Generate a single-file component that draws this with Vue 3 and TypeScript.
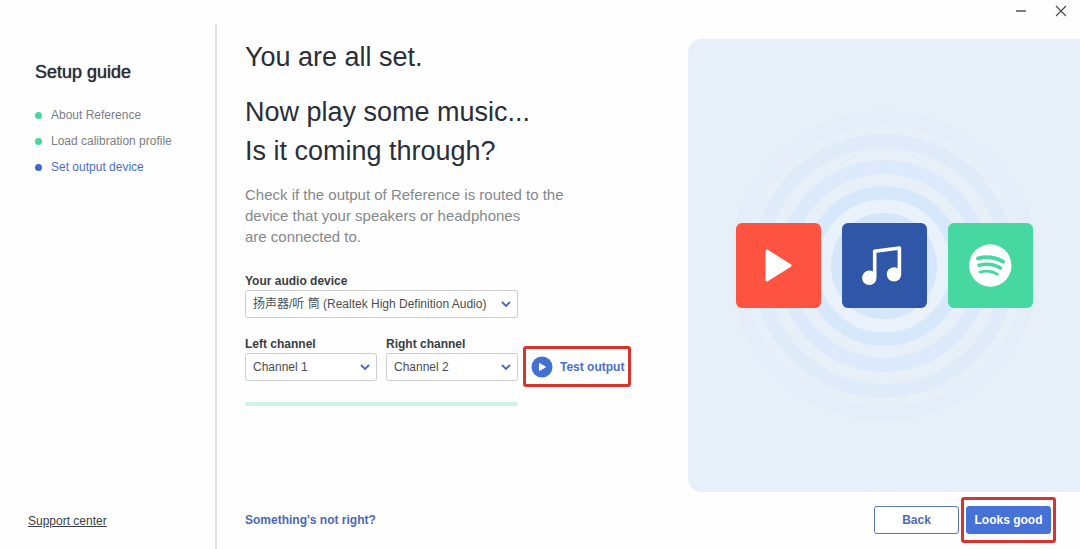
<script setup lang="ts">
import { ref } from 'vue'

interface Step {
  label: string
  state: 'done' | 'current'
}

const steps: Step[] = [
  { label: 'About Reference', state: 'done' },
  { label: 'Load calibration profile', state: 'done' },
  { label: 'Set output device', state: 'current' },
]

const devices: string[] = ['扬声器/听 筒 (Realtek High Definition Audio)']
const channels: string[] = ['Channel 1', 'Channel 2']

const device = ref(devices[0])
const left = ref(channels[0])
const right = ref(channels[1])

const rings = [
  { r: 73, opacity: 0.85 },
  { r: 99, opacity: 0.6 },
  { r: 125, opacity: 0.4 },
  { r: 148, opacity: 0.14 },
]
</script>

<template>
  <div class="window">
    <header class="titlebar">
      <button type="button" class="winbtn" aria-label="Minimize">
        <svg width="12" height="12" viewBox="0 0 12 12"><path d="M1 6H11" stroke="#444" stroke-width="1.4" /></svg>
      </button>
      <button type="button" class="winbtn" aria-label="Close">
        <svg width="12" height="12" viewBox="0 0 12 12"><path d="M1 1L11 11M11 1L1 11" stroke="#444" stroke-width="1.1" /></svg>
      </button>
    </header>

    <div class="body">
      <aside class="sidebar">
        <h2 class="guide">Setup guide</h2>
        <ol class="steps">
          <li v-for="s in steps" :key="s.label" class="step" :class="s.state">
            <span class="dot"></span>{{ s.label }}
          </li>
        </ol>
        <a class="support" href="#support">Support center</a>
      </aside>

      <main class="main">
        <div class="content">
          <section class="setup">
            <h1 class="title">You are all set.</h1>
            <p class="title question">Now play some music...<br />Is it coming through?</p>
            <p class="hint">
              Check if the output of Reference is routed to the<br />
              device that your speakers or headphones<br />
              are connected to.
            </p>

            <div class="form">
              <div class="field wide">
                <label for="device">Your audio device</label>
                <div class="picker">
                  <select id="device" v-model="device">
                    <option v-for="d in devices" :key="d">{{ d }}</option>
                  </select>
                  <svg class="chevron" width="10" height="7" viewBox="0 0 10 7"><path d="M1 1L5 5L9 1" /></svg>
                </div>
              </div>
              <div class="field">
                <label for="left">Left channel</label>
                <div class="picker">
                  <select id="left" v-model="left">
                    <option v-for="c in channels" :key="c">{{ c }}</option>
                  </select>
                  <svg class="chevron" width="10" height="7" viewBox="0 0 10 7"><path d="M1 1L5 5L9 1" /></svg>
                </div>
              </div>
              <div class="field">
                <label for="right">Right channel</label>
                <div class="picker">
                  <select id="right" v-model="right">
                    <option v-for="c in channels" :key="c">{{ c }}</option>
                  </select>
                  <svg class="chevron" width="10" height="7" viewBox="0 0 10 7"><path d="M1 1L5 5L9 1" /></svg>
                </div>
              </div>
              <div class="mark test-mark">
                <button type="button" class="test">
                  <svg width="22" height="22" viewBox="0 0 22 22">
                    <circle cx="11" cy="11" r="10.5" fill="#4470d2" />
                    <path d="M8.5 7.5L14.5 11L8.5 14.5Z" fill="#fff" stroke="#fff" stroke-width="1" stroke-linejoin="round" />
                  </svg>
                  Test output
                </button>
              </div>
              <div class="meter"></div>
            </div>
          </section>

          <section class="stage">
            <svg class="waves" width="360" height="360" viewBox="0 0 360 360">
              <circle cx="180" cy="180" r="53" fill="#d5e6fb" />
              <circle
                v-for="w in rings"
                :key="w.r"
                cx="180"
                cy="180"
                :r="w.r"
                fill="none"
                stroke="#d5e6fb"
                stroke-width="14"
                :stroke-opacity="w.opacity"
              />
              <circle cx="180" cy="180" r="60" fill="none" stroke="#e9f1fa" stroke-width="13" />
            </svg>
            <div class="tiles">
              <svg class="tile video" viewBox="0 0 85 85">
                <path d="M31 28L54 42.5L31 57Z" fill="#fff" stroke="#fff" stroke-width="3" stroke-linejoin="round" />
              </svg>
              <svg class="tile music" viewBox="0 0 85 85">
                <path d="M32.7 54V28.3L57.4 25V51" fill="none" stroke="#fff" stroke-width="3.6" stroke-linejoin="round" />
                <circle cx="27.3" cy="54.8" r="7.2" fill="#fff" />
                <circle cx="52" cy="51.4" r="7.2" fill="#fff" />
              </svg>
              <svg class="tile stream" viewBox="0 0 85 85">
                <circle cx="42.3" cy="42.5" r="21.2" fill="#fff" />
                <g fill="none" stroke="#47d7a0" stroke-linecap="round">
                  <path d="M30 35.5C38 33.2 48 34.2 55 38.6" stroke-width="4" />
                  <path d="M31 42.3C38.500 40.300 46.500 41.300 52.500 45" stroke-width="3.500" />
                  <path d="M32 49C38 47.500 44.500 48 49.500 51.300" stroke-width="2.800" />
                </g>
              </svg>
            </div>
          </section>
        </div>

        <footer class="footer">
          <a class="trouble" href="#help">Something's not right?</a>
          <div class="actions">
            <button type="button" class="btn back">Back</button>
            <div class="mark good-mark">
              <button type="button" class="btn primary">Looks good</button>
            </div>
          </div>
        </footer>
      </main>
    </div>
  </div>
</template>

<style>
body {
  margin: 0;
  background: #fefefe;
}
</style>

<style scoped>
.window {
  box-sizing: border-box;
  min-height: 100vh;
  display: flex;
  flex-direction: column;
  font-family: 'Liberation Sans', 'Noto Sans CJK SC', Arial, sans-serif;
  font-size: 12px;
  line-height: 16px;
  color: #2b2e38;
}
.titlebar {
  height: 24px;
  display: flex;
  justify-content: flex-end;
  align-items: flex-start;
  gap: 16px;
  padding-right: 7px;
}
.winbtn {
  width: 24px;
  height: 22px;
  padding: 0;
  border: 0;
  background: none;
  display: flex;
  align-items: center;
  justify-content: center;
}
.body {
  flex: 1;
  display: grid;
  grid-template-columns: 217px minmax(0, 1fr);
}
.sidebar {
  display: flex;
  flex-direction: column;
  border-right: 2px solid #e2e2e4;
  padding: 36px 12px 20px 28px;
}
.guide {
  margin: 0 7px 23px;
  font-size: 18px;
  line-height: 24px;
  font-weight: 400;
  text-shadow: 0 0 1px #2b2e38;
}
.steps {
  list-style: none;
  margin: 0 7px;
  padding: 0;
}
.step {
  display: flex;
  align-items: center;
  gap: 9px;
  height: 16px;
  margin-bottom: 10px;
  color: #7c8084;
}
.dot {
  width: 7px;
  height: 7px;
  border-radius: 50%;
  background: #47d7a0;
}
.current {
  color: #4c6fc0;
}
.current .dot {
  background: #3f69c8;
}
.support {
  margin-top: auto;
  align-self: flex-start;
  color: #3c3f45;
}
.main {
  display: flex;
  flex-direction: column;
  padding-left: 28px;
}
.content {
  flex: 1;
  display: grid;
  grid-template-columns: minmax(390px, 443fr) minmax(300px, 392fr);
}
.setup {
  padding-top: 14px;
}
.title {
  margin: 0;
  font-size: 27px;
  line-height: 39px;
  font-weight: 400;
}
.question {
  margin-top: 16px;
}
.hint {
  margin: 13px 0 26px;
  font-size: 15px;
  line-height: 21px;
  color: #85888c;
}
.form {
  display: grid;
  grid-template-columns: 132px 132px auto;
  justify-content: start;
  gap: 18px 9px;
}
.field {
  display: flex;
  flex-direction: column;
  gap: 1px;
}
.wide {
  grid-column: 1 / 3;
}
.wide + .field {
  grid-column: 1;
}
.field label {
  font-weight: 700;
  color: #3a3d43;
}
.picker {
  display: grid;
  align-items: center;
}
.picker select,
.chevron {
  grid-area: 1 / 1;
}
.picker select {
  box-sizing: border-box;
  width: 100%;
  height: 28px;
  padding: 0 24px 0 7px;
  border: 1px solid #cdced0;
  border-radius: 3px;
  background: #fff;
  appearance: none;
  font: inherit;
  color: #4a4d52;
}
.chevron {
  justify-self: end;
  margin-right: 7px;
  pointer-events: none;
}
.chevron path {
  fill: none;
  stroke: #4a66b8;
  stroke-width: 1.8;
}
.mark {
  box-sizing: border-box;
  border: 3px solid #d5352e;
  border-radius: 3px;
}
.test-mark {
  width: 108px;
  height: 41px;
  margin: 10px 0 -6px -4px;
}
.test {
  width: 100%;
  height: 100%;
  display: flex;
  align-items: center;
  gap: 7px;
  padding: 0 0 0 5px;
  border: 0;
  background: none;
  font: inherit;
  font-weight: 700;
  color: #4a6fc8;
  white-space: nowrap;
}
.test svg {
  flex: none;
}
.meter {
  grid-column: 1 / 3;
  height: 4px;
  margin-top: 3px;
  border-radius: 1px;
  background: #cff3e4;
}
.stage {
  display: grid;
  place-items: center;
  margin-top: 15px;
  overflow: hidden;
  border-radius: 14px 0 0 14px;
  background: #e7eff9;
}
.waves,
.tiles {
  grid-area: 1 / 1;
}
.tiles {
  display: flex;
  gap: 21px;
  z-index: 1;
}
.tile {
  width: 85px;
  height: 85px;
  border-radius: 6px;
}
.video {
  background: #ff5341;
}
.music {
  background: #3056a8;
}
.stream {
  background: #47d7a0;
}
.footer {
  display: flex;
  align-items: center;
  justify-content: space-between;
  padding: 5px 24px 6px 0;
}
.trouble {
  font-weight: 700;
  color: #4a68b8;
  text-decoration: none;
}
.actions {
  display: flex;
  align-items: center;
  gap: 2px;
}
.good-mark {
  padding: 6px 2px;
}
.btn {
  box-sizing: border-box;
  display: block;
  width: 85px;
  height: 28px;
  padding: 0;
  border: 1px solid #5a76b8;
  border-radius: 3px;
  background: #fff;
  font: inherit;
  font-weight: 700;
  color: #4f6cb0;
}
.primary {
  border-color: #4672d6;
  background: #4672d6;
  color: #fff;
}
</style>
